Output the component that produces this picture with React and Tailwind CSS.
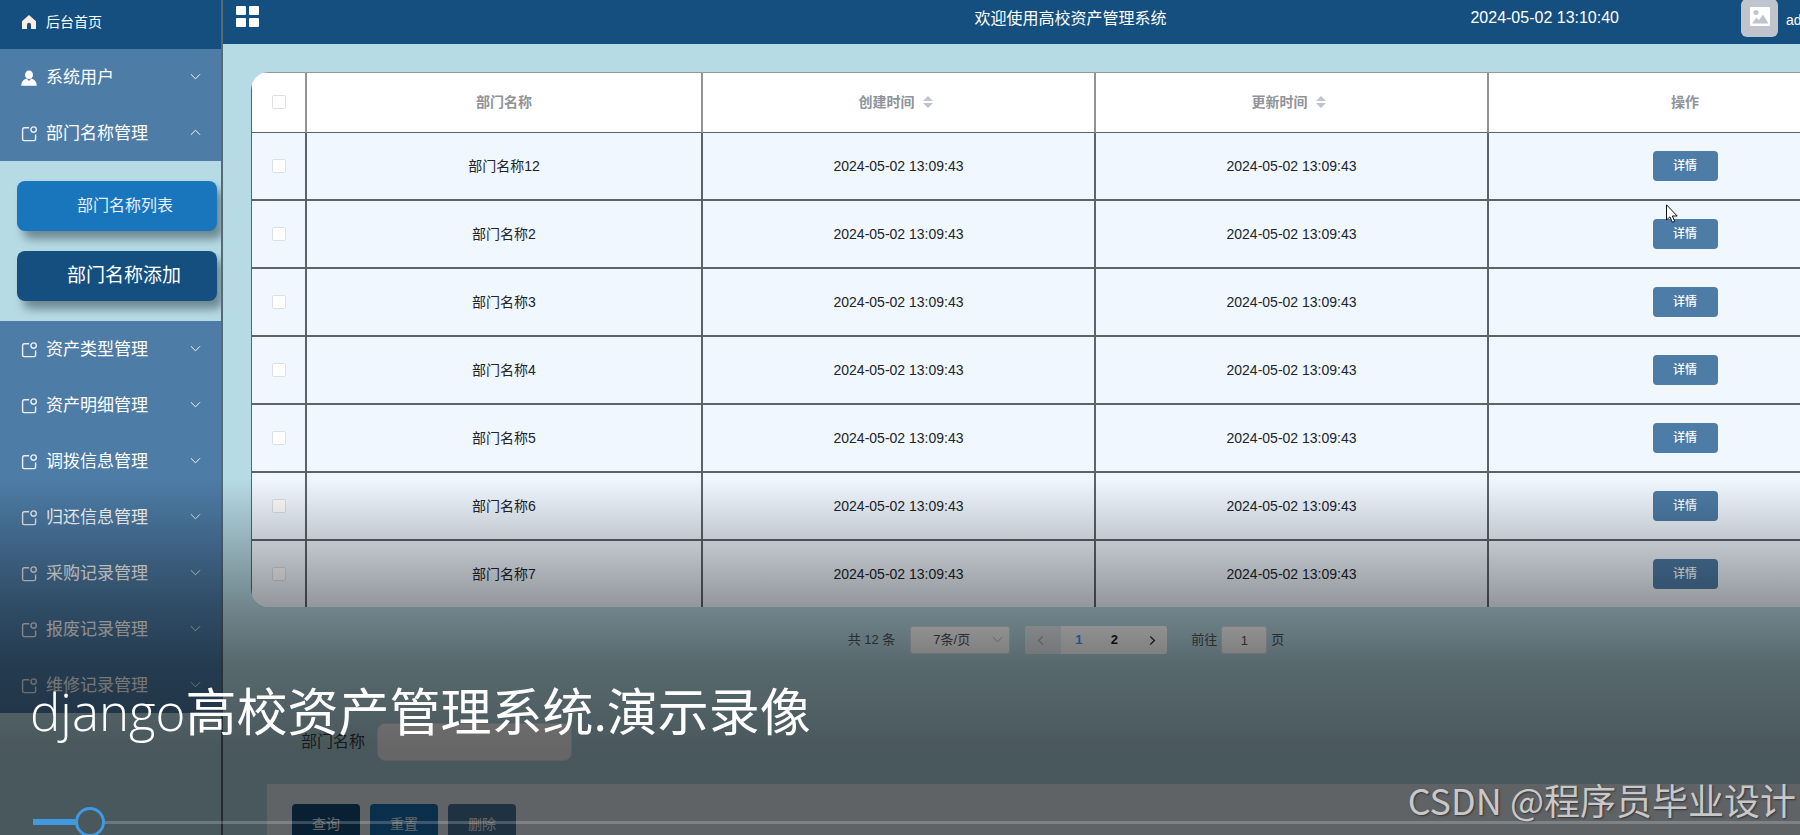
import React from "react";

const assetMenus = [
  "资产类型管理",
  "资产明细管理",
  "调拨信息管理",
  "归还信息管理",
  "采购记录管理",
  "报废记录管理",
  "维修记录管理",
];

const rows = ["部门名称12", "部门名称2", "部门名称3", "部门名称4", "部门名称5", "部门名称6", "部门名称7"];

const progress = 2.4;

function Chevron({ className, d }) {
  return (
    <svg viewBox="0 0 12 12" className={className} fill="none" stroke="currentColor" aria-hidden="true">
      <path d={d} />
    </svg>
  );
}

const DOWN = "M1 3.5 6 8.5 11 3.5";
const UP = "M1 8.5 6 3.5 11 8.5";
const LEFT = "M8.5 1.5 4 6 8.5 10.5";
const RIGHT = "M3.5 1.5 8 6 3.5 10.5";

function HomeIcon() {
  return (
    <svg viewBox="0 0 16 16" className="size-4 shrink-0" fill="#f7ede2" aria-hidden="true">
      <path d="M8 1 1 7.2V15h5v-4.2a2 2 0 0 1 4 0V15h5V7.2z" />
    </svg>
  );
}

function UserIcon() {
  return (
    <svg viewBox="0 0 16 16" className="size-4 shrink-0" fill="currentColor" aria-hidden="true">
      <ellipse cx="8" cy="4.8" rx="4" ry="4.3" />
      <path d="M5.6 8.6 8 11l2.4-2.4C13.6 9.5 15.7 12 15.8 15.8H.2C.3 12 2.4 9.5 5.6 8.6z" />
    </svg>
  );
}

function BoxIcon() {
  return (
    <svg viewBox="0 0 16 16" className="size-4 shrink-0" fill="none" stroke="#f2eef0" strokeWidth="1.4" aria-hidden="true">
      <path d="M8.2 1.7H3.2A1.6 1.6 0 0 0 1.6 3.3V13A1.6 1.6 0 0 0 3.2 14.6H13A1.6 1.6 0 0 0 14.6 13V8.4" />
      <circle cx="12.6" cy="3.6" r="2.7" />
    </svg>
  );
}

function MenuItem({ icon, label, open }) {
  return (
    <button type="button" className="flex h-14 w-full items-center bg-[#4d7ca6] pt-[2px] pr-5 pl-[21px] text-left text-[17px] text-white">
      {icon}
      <span className="ml-[9px] flex-1">{label}</span>
      <Chevron className="mb-1 size-[11px]" d={open ? UP : DOWN} />
    </button>
  );
}

function Sidebar() {
  return (
    <nav className="w-[223px] shrink-0 overflow-hidden border-r-2 border-[#566a76]">
      <a href="#home" className="flex h-[49px] items-center bg-[#154f80] pb-[5px] pl-[21px] text-sm text-white">
        <HomeIcon />
        <span className="ml-[9px]">后台首页</span>
      </a>
      <MenuItem icon={<UserIcon />} label="系统用户" />
      <MenuItem icon={<BoxIcon />} label="部门名称管理" open />
      <div className="flex flex-col gap-5 py-5 pr-1 pl-[17px]">
        <button type="button" className="h-[50px] rounded-lg bg-[#1976bc] pl-4 text-base text-[#e8f1fa] shadow-[6px_8px_10px_rgba(60,80,90,0.6)]">
          部门名称列表
        </button>
        <button type="button" className="h-[50px] rounded-lg bg-[#154f80] pl-[14px] text-[19px] text-white shadow-[6px_8px_10px_rgba(60,80,90,0.6)]">
          部门名称添加
        </button>
      </div>
      {assetMenus.map((label) => (
        <MenuItem key={label} icon={<BoxIcon />} label={label} />
      ))}
    </nav>
  );
}

function Header() {
  return (
    <header className="flex h-11 items-center bg-[#154f80] pr-1 pb-2 pl-[13px] text-base text-white">
      <div className="flex flex-1 pb-1">
        <button type="button" aria-label="菜单" className="grid grid-cols-2 gap-[3px]">
          <span className="h-[9px] w-[10px] rounded-[1px] bg-white" />
          <span className="h-[9px] w-[10px] rounded-[1px] bg-white" />
          <span className="h-[9px] w-[10px] rounded-[1px] bg-white" />
          <span className="h-[9px] w-[10px] rounded-[1px] bg-white" />
        </button>
      </div>
      <h1 className="pt-[2px]">欢迎使用高校资产管理系统</h1>
      <div className="flex flex-1 items-center justify-end">
        <time>2024-05-02 13:10:40</time>
        <div className="ml-[122px] flex w-[164px] items-center gap-2 text-sm">
          <span className="flex h-[38px] w-[37px] items-center justify-center rounded-md bg-[#c0c4cc]">
            <svg viewBox="0 0 20 19" className="mb-1 h-[19px] w-5" aria-hidden="true">
              <rect width="20" height="19" rx="1" fill="#fff" />
              <circle cx="6" cy="5.5" r="2.5" fill="#c0c4cc" />
              <path d="M2 16.5 6.5 10.5 9 13 13 7.5 18.5 16.5z" fill="#c0c4cc" />
            </svg>
          </span>
          <span className="pt-1">admin</span>
        </div>
      </div>
    </header>
  );
}

function Tick({ label }) {
  return (
    <input
      type="checkbox"
      aria-label={label}
      className="mx-auto block size-[14px] appearance-none rounded-[2px] border border-[#dcdfe6] bg-white"
    />
  );
}

function SortHeader({ label }) {
  return (
    <button type="button" className="inline-flex items-center gap-2 pr-[6px] font-bold">
      {label}
      <svg viewBox="0 0 10 12" className="h-3 w-[10px]" fill="#c0c4cc" aria-hidden="true">
        <path d="M0 5 5 0l5 5zM0 7l5 5 5-5z" />
      </svg>
    </button>
  );
}

function DepartmentTable() {
  const head = "h-[60px] border-b border-b-[#5c646a] px-0 pt-0 pb-[2px] border-r-2 border-r-[#919496] last:border-r-0";
  const cell = "h-[68px] border-b-2 border-r-2 border-[#5c646a] p-0 last:border-r-0 group-last:h-[66px] group-last:border-b-0";
  return (
    <div className="overflow-hidden rounded-[18px] bg-white">
      <table className="w-full table-fixed border-separate border-spacing-0 border-t border-l border-t-[#8e9a9e] border-l-[#5c646a] text-center text-sm">
        <colgroup>
          <col className="w-[55px]" />
          <col className="w-[396px]" />
          <col className="w-[393px]" />
          <col className="w-[393px]" />
          <col />
        </colgroup>
        <thead className="text-[#909399]">
          <tr>
            <th className={head}><Tick label="全选" /></th>
            <th className={head}>部门名称</th>
            <th className={head}><SortHeader label="创建时间" /></th>
            <th className={head}><SortHeader label="更新时间" /></th>
            <th className={head}>操作</th>
          </tr>
        </thead>
        <tbody className="bg-[#f0f7ff] text-[#20242c]">
          {rows.map((name) => (
            <tr key={name} className="group">
              <td className={cell}><Tick label={name} /></td>
              <td className={cell}>{name}</td>
              <td className={cell}>2024-05-02 13:09:43</td>
              <td className={cell}>2024-05-02 13:09:43</td>
              <td className={cell}>
                <button type="button" className="h-[30px] w-[65px] rounded bg-[#4d7ca6] text-xs font-medium text-white">
                  详情
                </button>
              </td>
            </tr>
          ))}
        </tbody>
      </table>
    </div>
  );
}

function Pagination() {
  return (
    <div className="mt-[19px] flex h-7 items-center justify-center text-[13px] text-[#505358]">
      <span>共 12 条</span>
      <span className="relative mx-[15px]">
        <select aria-label="每页条数" className="h-7 w-[100px] appearance-none rounded-[3px] border border-[#dcdfe6] bg-white pl-[22px]">
          <option>7条/页</option>
        </select>
        <Chevron className="pointer-events-none absolute top-2 right-[7px] size-[11px] text-[#b0b4bc]" d={DOWN} />
      </span>
      <div className="flex h-7 overflow-hidden rounded-[3px] bg-white font-bold">
        <button type="button" aria-label="上一页" disabled className="flex w-9 items-center justify-center bg-[#e8edf2] pr-[6px] text-[#b0b4bc]">
          <Chevron className="size-[11px] stroke-[1.5]" d={LEFT} />
        </button>
        <button type="button" className="w-[35px] text-[#409eff]">1</button>
        <button type="button" className="w-[36px] text-[#16181c]">2</button>
        <button type="button" aria-label="下一页" className="flex w-[35px] items-center justify-center pl-[6px] text-[#303133]">
          <Chevron className="size-[11px] stroke-[1.5]" d={RIGHT} />
        </button>
      </div>
      <label className="ml-6 flex items-center gap-1">
        前往
        <input defaultValue="1" className="h-7 w-[46px] rounded-[3px] border border-[#dcdfe6] bg-white text-center" />
        页
      </label>
    </div>
  );
}

function SearchPanel() {
  const button = "h-10 w-[68px] rounded text-sm text-white";
  return (
    <form className="mt-[69px]" onSubmit={(e) => e.preventDefault()}>
      <label className="ml-[50px] flex w-fit items-center gap-3 text-base text-[#3c3f44]">
        部门名称
        <input className="h-[38px] w-[195px] rounded-lg border border-[#e8e8e8] bg-white px-3" />
      </label>
      <div className="mt-[23px] ml-4 flex gap-[10px] bg-[#f0f7ff] px-[25px] py-5">
        <button type="submit" className={button + " bg-[#154f80]"}>查询</button>
        <button type="reset" className={button + " bg-[#1976bc]"}>重置</button>
        <button type="button" className={button + " bg-[#4d7ca6]"}>删除</button>
      </div>
    </form>
  );
}

function PlayerOverlay() {
  return (
    <div className="pointer-events-none absolute inset-x-0 bottom-0 flex h-[357px] flex-col justify-end bg-[linear-gradient(to_bottom,rgba(0,0,0,0)_0%,rgba(0,0,0,0.25)_23%,rgba(0,0,0,0.39)_36%,rgba(0,0,0,0.52)_52%,rgba(0,0,0,0.6)_76%)]">
      <h2 className="pl-[30px] text-[51px] leading-[72px] font-light text-white [font-family:'Open_Sans','Noto_Sans_CJK_SC',sans-serif]">
        django<span className="font-normal">高校资产管理系统.演示录像</span>
      </h2>
      <p className="mt-[34px] pr-1 text-right text-4xl leading-9 text-[#c8c8c8] [font-family:'Noto_Sans_CJK_SC',sans-serif] [text-shadow:1px_1px_2px_#333]">
        CSDN @程序员毕业设计
      </p>
      <div className="relative -mt-2 ml-[33px] flex h-[26px] items-center">
        <div className="h-[3px] flex-1 bg-white/20" />
        <div className="absolute left-0 h-[6px] bg-[#4199e1]" style={{ width: progress + "%" }} />
        <input
          type="range"
          aria-label="播放进度"
          step="0.1"
          defaultValue={progress}
          className="pointer-events-auto absolute inset-x-0 h-[30px] w-full appearance-none bg-transparent [&::-webkit-slider-thumb]:size-[30px] [&::-webkit-slider-thumb]:appearance-none [&::-webkit-slider-thumb]:rounded-full [&::-webkit-slider-thumb]:border-3 [&::-webkit-slider-thumb]:border-solid [&::-webkit-slider-thumb]:border-[#4199e1] [&::-webkit-slider-thumb]:bg-[#4a585c]"
        />
      </div>
    </div>
  );
}

export default function App() {
  return (
    <div className="relative h-screen overflow-hidden bg-[#b7dbe5] [font-family:'Liberation_Sans','Noto_Sans_CJK_SC',sans-serif]">
      <div className="flex min-h-full w-[calc(100%+109px)]">
        <Sidebar />
        <div className="min-w-0 flex-1">
          <Header />
          <main className="px-7 pt-7">
            <DepartmentTable />
            <Pagination />
            <SearchPanel />
          </main>
        </div>
      </div>
      <svg viewBox="0 0 12 19" className="absolute top-[204px] left-[1666px] h-[19px] w-3" fill="#fff" stroke="#111" aria-hidden="true">
        <path d="M.5.8V16l3.4-3.2 2.5 5.5 2.3-1-2.4-5.3h4.9z" />
      </svg>
      <PlayerOverlay />
    </div>
  );
}
